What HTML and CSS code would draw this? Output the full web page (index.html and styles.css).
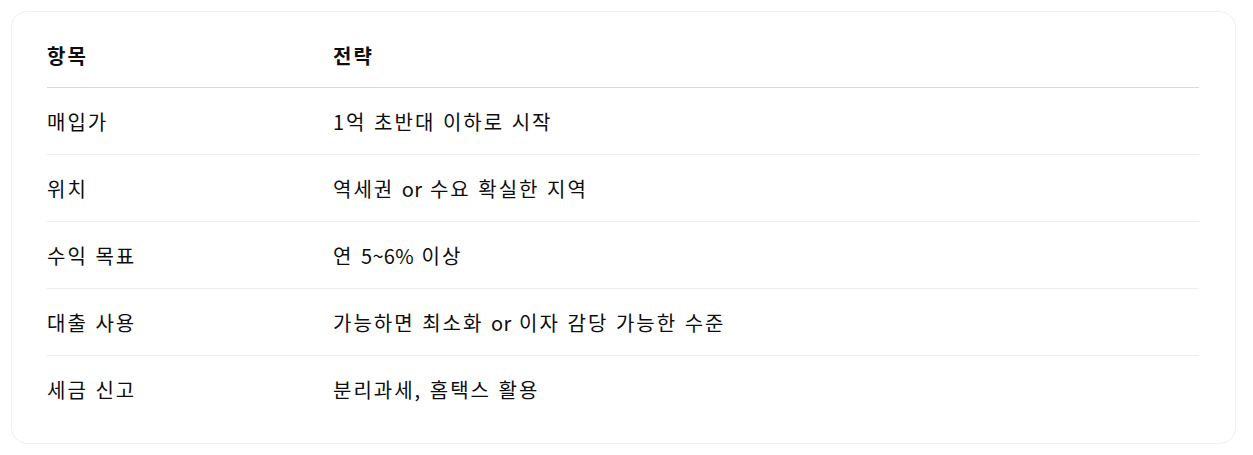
FILE: index.html
```html
<!DOCTYPE html>
<html lang="ko">
<head>
<meta charset="utf-8">
<link rel="stylesheet" href="styles.css">
</head>
<body>
<div class="card">
  <table class="tbl">
    <thead>
      <tr><th class="c1">항목</th><th>전략</th></tr>
    </thead>
    <tbody>
      <tr><td>매입가</td><td>1억 초반대 이하로 시작</td></tr>
      <tr><td>위치</td><td>역세권 <span class="lat">or</span> 수요 확실한 지역</td></tr>
      <tr><td>수익 목표</td><td>연 <span class="lat">5~6%</span> 이상</td></tr>
      <tr><td>대출 사용</td><td>가능하면 최소화 <span class="lat">or</span> 이자 감당 가능한 수준</td></tr>
      <tr><td>세금 신고</td><td>분리과세, 홈택스 활용</td></tr>
    </tbody>
  </table>
</div>
</body>
</html>
```
FILE: styles.css
```css
html, body {
  margin: 0;
  padding: 0;
  background: #ffffff;
}
body {
  padding: 11px 17px 11px 11px;
  font-family: "Noto Sans CJK KR", "Noto Sans", sans-serif;
  color: #0d0d0d;
}
.card {
  border: 1px solid #efefef;
  border-radius: 16px;
  padding: 11px 36px 21px 35px;
}
.tbl {
  width: 100%;
  border-collapse: collapse;
  font-size: 20px;
  letter-spacing: 2px;
}
.tbl .lat {
  letter-spacing: 0.3px;
}
.tbl th {
  text-align: left;
  font-weight: 700;
  height: 64px;
  padding: 0;
  border-bottom: 1px solid #d9d9d9;
  vertical-align: middle;
}
.tbl th.c1 { width: 286px; }
.tbl td {
  height: 66px;
  padding: 0;
  vertical-align: middle;
  border-bottom: 1px solid #ededed;
  font-weight: 400;
}
.tbl tbody tr:last-child td { border-bottom: none; }
```
